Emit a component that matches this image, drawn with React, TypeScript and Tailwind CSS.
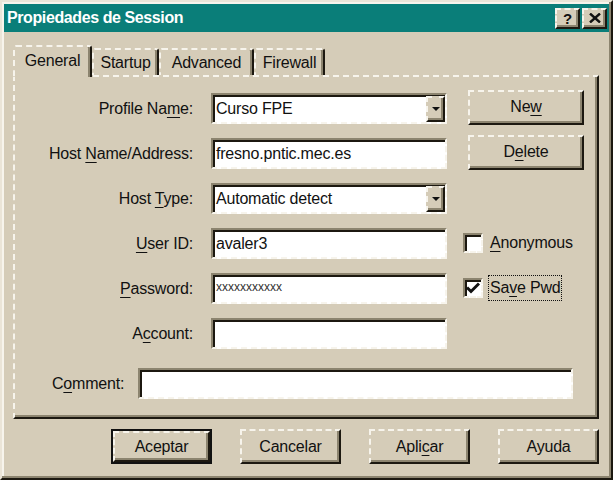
import type { ReactNode } from "react";

const raised =
  "border-2 [border-style:dashed_solid_solid_dashed] border-t-[#f7f4ec] border-l-[#f7f4ec] border-b-[#1c1810] border-r-[#1c1810] shadow-[inset_-2px_-2px_0_#8c846f]";

const sunken =
  "border-2 [border-style:solid_dashed_dashed_solid] border-t-[#8c846f] border-l-[#8c846f] border-b-[#f7f4ec] border-r-[#f7f4ec] shadow-[inset_2px_2px_0_#1c1810] bg-white";

const U = ({ children }: { children: ReactNode }) => (
  <span className="underline underline-offset-[3px] decoration-1">{children}</span>
);

const Field = ({ children, combo }: { children?: ReactNode; combo?: boolean }) => (
  <div className={`w-[236px] h-[31px] flex items-stretch ${sunken}`}>
    <div className="flex-1 flex items-center pl-[3px] pt-[1px] overflow-hidden whitespace-nowrap">
      {children}
    </div>
    {combo && (
      <div className={`w-[19px] bg-[#d5ccb8] flex items-center justify-center mt-[1px] ${raised}`}>
        <svg width="8" height="4" viewBox="0 0 8 4">
          <path d="M0 0H8L4 4Z" fill="#111" />
        </svg>
      </div>
    )}
  </div>
);

const Label = ({ children }: { children: ReactNode }) => (
  <div className="w-[179px] text-right pr-[1px] whitespace-nowrap">{children}</div>
);

const Button = ({ children, wide, def }: { children: ReactNode; wide?: boolean; def?: boolean }) => {
  const inner = (
    <div className={`h-full w-full flex items-center justify-center ${raised}`}>{children}</div>
  );
  return (
    <div className={`${wide ? "w-[101px]" : "w-[116px]"} h-[35px]`}>
      {def ? <div className="h-full w-full border-2 border-[#111]">{inner}</div> : inner}
    </div>
  );
};

const CheckBox = ({ checked }: { checked?: boolean }) => (
  <div className={`w-[20px] h-[20px] flex items-center justify-center ${sunken}`}>
    {checked && (
      <svg width="14" height="12" viewBox="0 0 14 12">
        <path d="M1 5.5L5 9.5L13 1.5" stroke="#111" strokeWidth="3" fill="none" />
      </svg>
    )}
  </div>
);

const Tab = ({ children, w, active }: { children: ReactNode; w: string; active?: boolean }) => (
  <div
    className={`${w} ${
      active ? "h-[32px] -mb-[2px] relative z-10 bg-[#d5ccb8]" : "h-[27px]"
    } flex items-center justify-center border-t-2 border-l-2 border-r-2 [border-style:dashed_solid_none_dashed] border-t-[#f7f4ec] border-l-[#f7f4ec] border-r-[#1c1810] rounded-t-[3px] shadow-[inset_-2px_0_0_#8c846f]`}
  >
    <span className={active ? "-mt-[3px]" : "mt-[1px]"}>{children}</span>
  </div>
);

export default function App() {
  return (
    <div className="w-[613px] h-[480px] bg-[#d5ccb8] font-['Liberation_Sans',Arial,sans-serif] text-[16px] text-[#111] tracking-[-0.2px]">
      <div className="h-full flex flex-col p-[2px] border-2 [border-style:solid] border-t-[#ebe5d8] border-l-[#ebe5d8] border-b-[#1c1810] border-r-[#1c1810] shadow-[inset_-2px_-2px_0_#8c846f,inset_2px_2px_0_#f7f4ec]">
        <div className="h-[28px] shrink-0 bg-[#0a7e79] flex items-center pl-[3px] pr-[2px]">
          <span className="text-white font-bold text-[16px] tracking-[-0.4px]">Propiedades de Session</span>
          <div className="ml-auto flex gap-[2px]">
            <div className={`w-[25px] h-[21px] bg-[#d5ccb8] flex items-center justify-center font-bold text-[15px] leading-none ${raised}`}>
              ?
            </div>
            <div className={`w-[25px] h-[21px] bg-[#d5ccb8] flex items-center justify-center ${raised}`}>
              <svg width="12" height="10" viewBox="0 0 12 10">
                <path d="M1 0.5L11 9.5M11 0.5L1 9.5" stroke="#111" strokeWidth="2.4" />
              </svg>
            </div>
          </div>
        </div>

        <div className="flex-1 flex flex-col pl-[9px] pr-[10px] pt-[13px]">
          <div className="h-[30px] flex items-end">
            <Tab w="w-[79px]" active>
              General
            </Tab>
            <Tab w="w-[67px]">Startup</Tab>
            <Tab w="w-[95px]">Advanced</Tab>
            <Tab w="w-[71px]">Firewall</Tab>
          </div>

          <div className="h-[344px] flex flex-col pt-[16px] border-2 [border-style:dashed_solid_solid_dashed] border-t-[#f7f4ec] border-l-[#f7f4ec] border-b-[#1c1810] border-r-[#1c1810] shadow-[inset_-2px_-2px_0_#8c846f]">
            <div className="flex flex-col gap-[14px]">
              <div className="h-[31px] flex items-center">
                <Label>
                  Profile Na<U>m</U>e:
                </Label>
                <div className="ml-[17px]">
                  <Field combo>Curso FPE</Field>
                </div>
                <div className="ml-[21px] -mt-[3px]">
                  <Button>
                    Ne<U>w</U>
                  </Button>
                </div>
              </div>
              <div className="h-[31px] flex items-center">
                <Label>
                  Host <U>N</U>ame/Address:
                </Label>
                <div className="ml-[17px]">
                  <Field>fresno.pntic.mec.es</Field>
                </div>
                <div className="ml-[21px] -mt-[3px]">
                  <Button>
                    D<U>e</U>lete
                  </Button>
                </div>
              </div>
              <div className="h-[31px] flex items-center">
                <Label>
                  Host <U>T</U>ype:
                </Label>
                <div className="ml-[17px]">
                  <Field combo>Automatic detect</Field>
                </div>
              </div>
              <div className="h-[31px] flex items-center">
                <Label>
                  <U>U</U>ser ID:
                </Label>
                <div className="ml-[17px]">
                  <Field>avaler3</Field>
                </div>
                <div className="ml-[16px] flex items-center gap-[7px] -mt-[2px]">
                  <CheckBox />
                  <span>
                    <U>A</U>nonymous
                  </span>
                </div>
              </div>
              <div className="h-[31px] flex items-center">
                <Label>
                  <U>P</U>assword:
                </Label>
                <div className="ml-[17px]">
                  <Field>
                    <span className="text-[12px] text-[#333] -mt-[5px] tracking-normal">xxxxxxxxxxx</span>
                  </Field>
                </div>
                <div className="ml-[16px] flex items-center gap-[5px] -mt-[2px]">
                  <CheckBox checked />
                  <span className="border border-dotted border-[#111] px-[1px] leading-[24px]">
                    Sa<U>v</U>e Pwd
                  </span>
                </div>
              </div>
              <div className="h-[31px] flex items-center">
                <Label>
                  A<U>c</U>count:
                </Label>
                <div className="ml-[17px]">
                  <Field />
                </div>
              </div>
            </div>

            <div className="mt-[19px] h-[31px] flex items-center pl-[37px]">
              <span className="w-[86px] whitespace-nowrap">
                C<U>o</U>mment:
              </span>
              <div className={`w-[435px] h-[31px] ${sunken}`} />
            </div>
          </div>

          <div className="mt-[10px] flex justify-end gap-[28px]">
            <Button wide def>
              Aceptar
            </Button>
            <Button wide>Cancelar</Button>
            <Button wide>
              Apli<U>c</U>ar
            </Button>
            <Button wide>Ayuda</Button>
          </div>
        </div>
      </div>
    </div>
  );
}
